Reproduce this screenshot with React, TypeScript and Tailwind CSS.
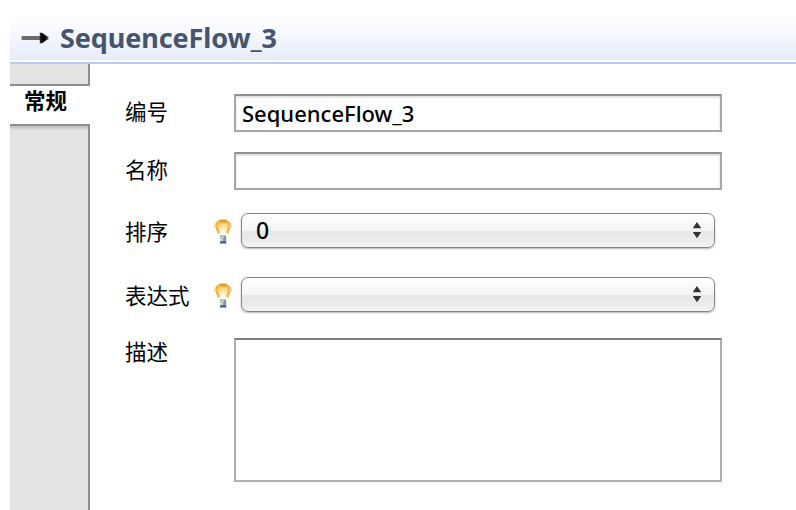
import type { ReactNode } from "react";

function ArrowIcon() {
  return (
    <svg width="28" height="12" viewBox="0 0 28 12" className="shrink-0">
      <defs>
        <linearGradient id="head" x1="0" x2="1">
          <stop offset="0" stopColor="#333" />
          <stop offset="0.3" stopColor="#000" />
          <stop offset="0.7" stopColor="#111" />
          <stop offset="1" stopColor="#888" />
        </linearGradient>
      </defs>
      <rect x="0.5" y="4" width="19" height="4" rx="0.8" fill="#6b6b6b" />
      <path d="M18.8 0.8 H21 L23.5 2.6 L25.5 4 L27.5 4.6 V7.4 L25.5 8 L23.5 9.4 L21 11.2 H18.8 Z" fill="url(#head)" />
    </svg>
  );
}

function BulbIcon() {
  return (
    <svg width="18" height="25" viewBox="0 0 18 25" className="relative top-px shrink-0">
      <defs>
        <linearGradient id="glass" x1="0" y1="0" x2="0" y2="1">
          <stop offset="0" stopColor="#f9cf70" />
          <stop offset="0.4" stopColor="#fde6ac" />
          <stop offset="0.75" stopColor="#fffaf0" />
          <stop offset="1" stopColor="#ffffff" />
        </linearGradient>
      </defs>
      <path d="M5.5 0.5 H12.5 L14.5 2.5 H16 V4.5 H17.8 V8.5 H16 V11 L14.8 12.5 V14.5 H3.2 V12.5 L2 11 V8.5 H0.2 V4.5 H2 V2.5 H3.5 Z" fill="#f5b845" />
      <path d="M6 3.8 H12 L13.8 6 V9.5 L12.3 11.5 V16.5 H5.7 V11.5 L4.2 9.5 V6 Z" fill="url(#glass)" />
      <path d="M5.5 2 H12.5" stroke="#e39a2d" strokeWidth="2.4" />
      <path d="M1 4.8 V8.2 M17 4.8 V8.2" stroke="#fae0a8" strokeWidth="1.6" />
      <rect x="6" y="16.5" width="6.2" height="8" fill="#8995aa" />
      <path d="M6 18.4 H10" stroke="#c9d0dc" strokeWidth="1.8" />
      <path d="M6 20.8 H9" stroke="#e4e8ee" strokeWidth="2" />
      <rect x="6" y="22.2" width="6.2" height="2.3" fill="#596885" />
    </svg>
  );
}

function Label({ children }: { children: ReactNode }) {
  return <div className="w-[89px] shrink-0 text-[21.5px] leading-8">{children}</div>;
}

function TextField({ value = "" }: { value?: string }) {
  return (
    <div className="ml-5 flex h-[38px] w-[488px] items-center border-2 border-[#a7a7a7] border-t-[#8f8f8f] bg-white pl-1.5 shadow-[inset_0_2px_1px_#e4e4e4,inset_1px_0_1px_#f0f0f0,inset_-1px_0_1px_#f0f0f0]">
      <span className="text-[22px] leading-8 font-medium">{value}</span>
    </div>
  );
}

function Select({ value = "" }: { value?: string }) {
  return (
    <>
      <BulbIcon />
      <div className="ml-[9px] flex h-[35px] w-[474px] items-center justify-between rounded-[7px] border-[1.5px] border-[#858585] bg-[linear-gradient(to_bottom,#fff_0%,#f5f5f5_48%,#e7e7e7_54%,#ebebeb_80%,#f5f5f5_100%)] pr-3 pl-3.5 shadow-[0_1px_2px_#b5b5b5]">
        <span className="text-[23px] leading-8 font-medium">{value}</span>
        <svg width="10" height="18" viewBox="0 0 10 18">
          <path d="M5 1 L9.3 7.2 H0.7 Z M0.7 11 H9.3 L5 17.2 Z" fill="#333" />
        </svg>
      </div>
    </>
  );
}

export default function App() {
  return (
    <div className="flex h-[510px] w-[796px] flex-col overflow-hidden bg-white pl-2.5 font-['Noto_Sans','Noto_Sans_CJK_SC',sans-serif] text-black">
      <header className="mt-3 flex h-12 shrink-0 items-center gap-[11px] bg-[linear-gradient(to_bottom,#fff,#f5f8fe_45%,#e5ebf9)] pt-1 pl-[11px]">
        <ArrowIcon />
        <h1 className="text-[27px] leading-9 font-bold tracking-[-0.1px] text-[#46546d]">SequenceFlow_3</h1>
      </header>
      <div className="mt-0.5 h-0.5 shrink-0 bg-[#b5ccf0]" />
      <div className="flex min-h-0 flex-1">
        <nav className="flex w-20 shrink-0 flex-col">
          <div className="flex h-5 shrink-0 border-r-2 border-[#8e8e8e] bg-[#e3e3e3]" />
          <div className="h-[42px] shrink-0 border-y-2 border-[#8e8e8e] bg-white pl-3.5 text-[21.5px] leading-[29px] font-bold">
            常规
          </div>
          <div className="flex-1 border-r-2 border-[#8e8e8e] bg-[linear-gradient(to_bottom,#c6c6c6_0,#c6c6c6_2px,#d4d4d4_2px,#d4d4d4_4px,#e3e3e3_4px)]" />
        </nav>
        <main className="flex flex-1 flex-col pt-[30px] pl-[35px]">
          <div className="flex h-[38px] items-center">
            <div className="pb-0.5">
              <Label>编号</Label>
            </div>
            <TextField value="SequenceFlow_3" />
          </div>
          <div className="mt-5 flex h-[38px] items-center">
            <div className="pb-0.5">
              <Label>名称</Label>
            </div>
            <TextField />
          </div>
          <div className="mt-[22px] flex h-9 items-center">
            <div className="pt-1">
              <Label>排序</Label>
            </div>
            <Select value="0" />
          </div>
          <div className="mt-7 flex h-9 items-center">
            <div className="pt-1">
              <Label>表达式</Label>
            </div>
            <Select />
          </div>
          <div className="mt-[26px] flex items-start">
            <div className="-mt-0.5">
              <Label>描述</Label>
            </div>
            <div className="ml-5 h-36 w-[488px] border-2 border-[#b0b0b0] border-t-[#808080] bg-white" />
          </div>
        </main>
      </div>
    </div>
  );
}
